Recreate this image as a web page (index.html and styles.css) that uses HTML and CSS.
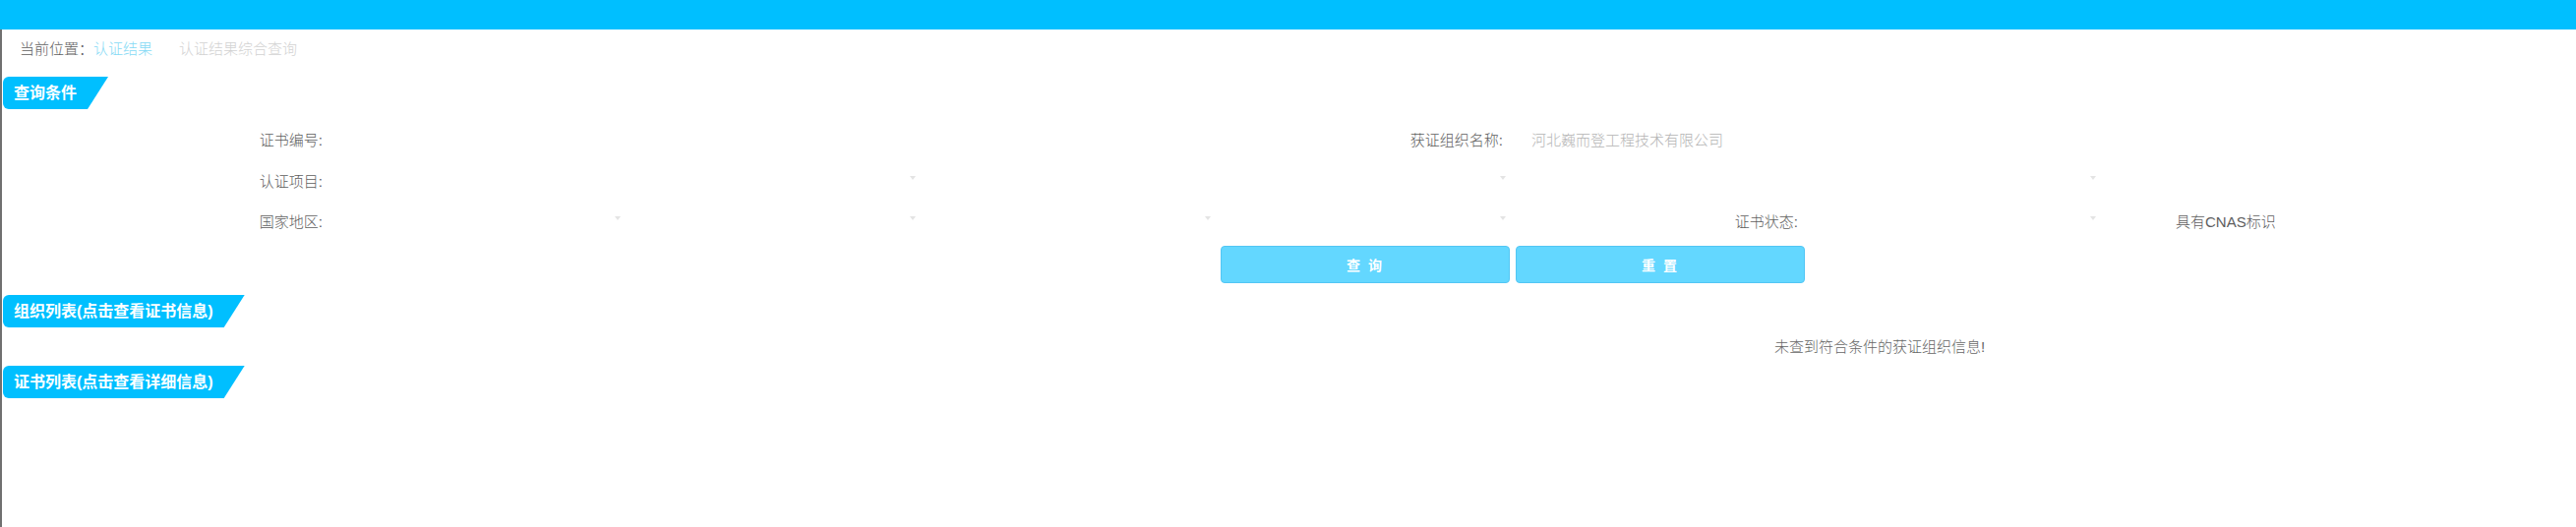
FILE: index.html
```html
<!DOCTYPE html>
<html>
<head>
  <meta charset="utf-8">
  <title>认证结果综合查询</title>
  <link rel="stylesheet" href="styles.css">
</head>
<body>
  <div class="top-bar"></div>
  <div class="main">
    <div class="crumbs">
      <span class="crumb-label">当前位置：</span><span class="crumb-link">认证结果</span><span class="crumb-current">认证结果综合查询</span>
    </div>

    <div class="tab">查询条件</div>
    <form class="search-form">
      <div class="form-row row-1">
        <div class="label">证书编号:</div>
        <div class="field span-3"></div>
        <div class="label">获证组织名称:</div>
        <div class="field span-3 value">河北巍而登工程技术有限公司</div>
      </div>
      <div class="form-row row-2">
        <div class="label">认证项目:</div>
        <div class="select span-2"><span class="arrow"></span></div>
        <div class="select span-2"><span class="arrow"></span></div>
        <div class="select span-2"><span class="arrow"></span></div>
      </div>
      <div class="form-row row-3">
        <div class="label">国家地区:</div>
        <div class="select"><span class="arrow"></span></div>
        <div class="select"><span class="arrow"></span></div>
        <div class="select"><span class="arrow"></span></div>
        <div class="select"><span class="arrow"></span></div>
        <div class="label">证书状态:</div>
        <div class="select"><span class="arrow"></span></div>
        <div class="cnas">具有CNAS标识</div>
      </div>
      <div class="form-row button-row">
        <button type="button" class="btn">查 询</button>
        <button type="button" class="btn">重 置</button>
      </div>
    </form>

    <div class="tab tab-list">组织列表(点击查看证书信息)</div>
    <div class="empty">未查到符合条件的获证组织信息!</div>

    <div class="tab">证书列表(点击查看详细信息)</div>
  </div>
</body>
</html>
```

FILE: styles.css
```css
/* Page frame */
body {
  margin: 0;
  background-color: #fff;
  font-family: "Liberation Sans", "Noto Sans CJK SC", sans-serif;
  font-size: 15px;
  font-weight: 300;
  color: #5e5e5e;
}

.top-bar {
  height: 30px;
  background-color: #00bfff;
}

.main {
  border-left: 2px solid #707070;
  min-height: 506px;
  box-sizing: border-box;
}

/* Breadcrumb */
.crumbs {
  height: 40px;
  line-height: 40px;
  padding-left: 18px;
}

.crumb-label {
  color: #5e5e5e;
}

.crumb-link {
  color: #86daf5;
}

.crumb-current {
  margin-left: 27px;
  color: #d2d2d2;
}

/* Section tabs */
.tab {
  width: fit-content;
  height: 33px;
  line-height: 33px;
  margin-left: 1px;
  padding: 0 32px 0 11px;
  font-size: 16px;
  font-weight: bold;
  color: #fff;
  background-color: #00bfff;
  border-radius: 6px 0 0 6px;
  clip-path: polygon(0 0, 100% 0, calc(100% - 21px) 100%, 0 100%);
}

.crumbs + .tab {
  margin-top: 8px;
}

/* Search form */
.search-form {
  margin: 0;
  padding-top: 9px;
}

.form-row {
  display: grid;
  grid-template-columns: 330px repeat(6, 300px) 1fr;
  height: 42px;
}

.row-3 {
  height: 40px;
}

.label {
  display: flex;
  align-items: center;
  justify-content: flex-end;
  padding-right: 4px;
}

.span-2 {
  grid-column: span 2;
}

.span-3 {
  grid-column: span 3;
}

.value {
  display: flex;
  align-items: center;
  padding-left: 25px;
  color: #b4b4b4;
}

.select {
  display: flex;
  align-items: center;
  justify-content: flex-end;
  padding-right: 1px;
}

.arrow {
  width: 0;
  height: 0;
  margin-bottom: 5px;
  border-left: 3px solid transparent;
  border-right: 3px solid transparent;
  border-top: 4px solid #e4e4e4;
}

.cnas {
  display: flex;
  align-items: center;
  padding-left: 80px;
}

/* Buttons */
.button-row {
  height: 38px;
  margin-top: 6px;
}

.btn {
  grid-column: 5;
  width: 294px;
  height: 38px;
  margin-left: 9px;
  border: 1px solid #52c6f4;
  border-radius: 4px;
  background-color: #63d7ff;
  color: #fff;
  font-family: "Liberation Sans", "Noto Sans CJK SC", sans-serif;
  font-size: 14px;
  font-weight: bold;
  letter-spacing: 2px;
  cursor: pointer;
}

.btn + .btn {
  grid-column: 6;
}

/* Result lists */
.tab-list {
  margin-top: 12px;
}

.empty {
  height: 39px;
  line-height: 39px;
  padding-left: 1802px;
  color: #666;
}
```
